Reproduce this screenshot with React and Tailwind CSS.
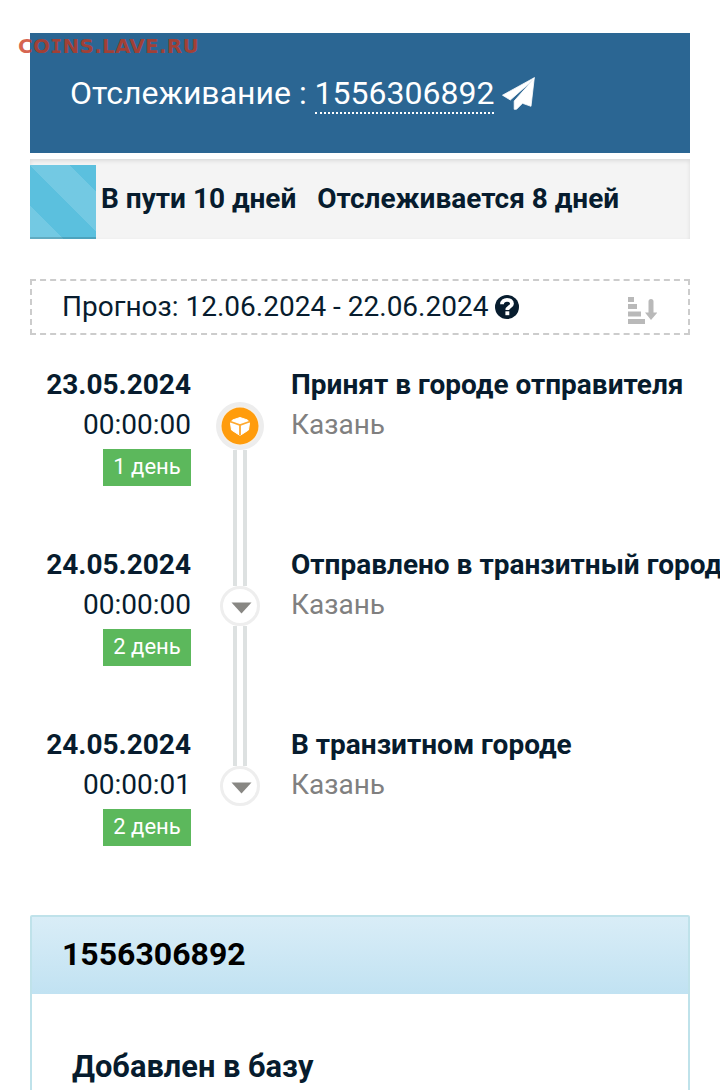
import React from 'react';

const TRACK = '1556306892';

const events = [
  { date: '23.05.2024', time: '00:00:00', days: '1 день', title: 'Принят в городе отправителя', city: 'Казань' },
  { date: '24.05.2024', time: '00:00:00', days: '2 день', title: 'Отправлено в транзитный город', city: 'Казань' },
  { date: '24.05.2024', time: '00:00:01', days: '2 день', title: 'В транзитном городе', city: 'Казань' },
];

const PlaneIcon = () => (
  <svg className="ml-2 shrink-0" width="33" height="33" viewBox="0 0 33 33" fill="#fff" stroke="#fff" strokeWidth="0.8" strokeLinejoin="round">
    <path d="M32.3 0.700L0.500 18.200l7.800 4.800L27 6.500z" />
    <path d="M32.3 0.700L29 29.300 20.500 26.300l-6 6h-2.300V24L28.500 5.500z" />
  </svg>
);

const HelpIcon = () => (
  <svg className="ml-[7px] shrink-0" width="24" height="24" viewBox="0 0 24 24">
    <circle cx="12" cy="12" r="12" fill="#071c2e" />
    <path d="M7 9.300c0-3 2.200-4.500 5-4.500s5 1.500 5 3.900c0 3.200-4.700 2.900-4.700 6.300" fill="none" stroke="#fff" strokeWidth="3.800" />
    <rect x="10.400" y="16.300" width="3.900" height="3.900" fill="#fff" />
  </svg>
);

const SortIcon = () => (
  <svg width="30" height="28" viewBox="0 0 30 28" fill="#b9b9b9">
    <rect x="1" y="0" width="6" height="5" />
    <rect x="1" y="7" width="9" height="5" />
    <rect x="1" y="14.500" width="13" height="5" />
    <rect x="1" y="22" width="17" height="5" />
    <path d="M21.500 4.500q0-2.500 2.500-2.500t2.500 2.500V15.500h4L24 23 18 15.500h3.500z" />
  </svg>
);

const BoxMarker = () => (
  <svg className="shrink-0" width="48" height="48" viewBox="0 0 48 48">
    <circle cx="24" cy="24" r="24" fill="#ededed" />
    <circle cx="24" cy="24" r="20" fill="#f5efe6" />
    <circle cx="24" cy="24" r="18.500" fill="#ff9c0c" />
    <path
      d="M24 15.500l7.500 2.500 2 3-1 7L24 33.500 15.500 28l-1-7 2-3z"
      fill="#fff"
      stroke="#fff"
      strokeLinejoin="round"
    />
    <path d="M14 19.500L24 23l10-3.500M24 23v10.500" fill="none" stroke="#ffa92f" strokeWidth="1.800" />
  </svg>
);

const ArrowMarker = () => (
  <svg className="shrink-0" width="40" height="40" viewBox="0 0 40 40">
    <circle cx="20" cy="20" r="18.500" fill="#fff" stroke="#eeeeee" strokeWidth="3" />
    <path d="M11.500 16.500h20L21.500 27.500z" fill="#888783" />
  </svg>
);

const Line = ({ className }) => (
  <div className={`w-3.5 border-x-4 border-[#dde1e1] bg-white ${className}`} />
);

const EventRow = ({ event, first, last }) => (
  <div className="flex h-[180px]">
    {/* Date */}
    <div className="flex w-[161px] shrink-0 flex-col items-end pt-px">
      <div className="h-10 font-bold leading-10">{event.date}</div>
      <div className="h-10 leading-10">{event.time}</div>
      <div className="mt-1 h-[37px] w-[88px] bg-[#5cb85c] text-center text-[22px] leading-[36px] text-white">
        {event.days}
      </div>
    </div>

    {/* Marker */}
    <div className="flex w-[98px] shrink-0 flex-col items-center">
      {first ? <div className="h-[38px]" /> : <Line className="h-[42px]" />}
      {first ? <BoxMarker /> : <ArrowMarker />}
      {!last && <Line className="flex-1" />}
    </div>

    {/* Status */}
    <div className="ml-0.5 whitespace-nowrap pt-px leading-10">
      <div className="font-bold">{event.title}</div>
      <div className="text-[#808080]">{event.city}</div>
    </div>
  </div>
);

const App = () => {
  return (
    <div className="relative h-[1090px] w-[720px] overflow-hidden bg-white px-[30px] pt-[33px] font-['Roboto',sans-serif] text-[28px] text-[#071c2e]">
      {/* Watermark */}
      <div className="absolute left-[18px] top-[34px] whitespace-nowrap font-['DejaVu_Sans',sans-serif] text-[20px] font-bold leading-[24px] tracking-[0.25px] text-[#c93417]/75">
        CO<span className="font-['DejaVu_Sans_Mono',monospace]">I</span>NS.LAVE.RU
      </div>

      {/* Header */}
      <div className="flex h-[120px] items-center bg-[#2b6693] px-10 text-[32px] text-white">
        <div>
          Отслеживание : <span className="border-b-2 border-dotted border-white">{TRACK}</span>
        </div>
        <PlaneIcon />
      </div>

      {/* Progress */}
      <div className="mt-1.5 flex h-20 bg-[#f4f4f4] pt-1.5 shadow-[inset_0_2px_4px_rgba(0,0,0,0.1)]">
        <div className="w-[66px] bg-[#5bc0de] bg-[linear-gradient(45deg,rgba(255,255,255,.15)_25%,transparent_25%,transparent_50%,rgba(255,255,255,.15)_50%,rgba(255,255,255,.15)_75%,transparent_75%)] bg-[size:80px_80px] shadow-[inset_0_-2px_0_rgba(0,0,0,0.15)]" />
        <div className="flex gap-[21px] pl-[5px] font-bold leading-[67px]">
          <span>В пути 10 дней</span>
          <span>Отслеживается 8 дней</span>
        </div>
      </div>

      {/* Forecast */}
      <div className="mt-10 flex h-14 items-center border-2 border-dashed border-[#ccc] pl-[30px] pr-[31px]">
        <span>Прогноз: 12.06.2024 - 22.06.2024</span>
        <HelpIcon />
        <div className="ml-auto mt-2">
          <SortIcon />
        </div>
      </div>

      {/* Timeline */}
      <div className="mt-[29px]">
        {events.map((event, i) => (
          <EventRow key={i} event={event} first={i === 0} last={i === events.length - 1} />
        ))}
      </div>

      {/* Details */}
      <div className="mt-[11px] h-[200px] rounded-t-[2px] border-2 border-[#bfe2ea] font-bold">
        <div className="h-[77px] bg-linear-to-b from-[#d9edf7] to-[#c1e2f2] pl-[30px] text-[32px] leading-[75px] text-black">
          {TRACK}
        </div>
        <div className="pl-10 pt-[53px] text-[30.8px] leading-10">Добавлен в базу</div>
      </div>
    </div>
  );
};

export default App;
